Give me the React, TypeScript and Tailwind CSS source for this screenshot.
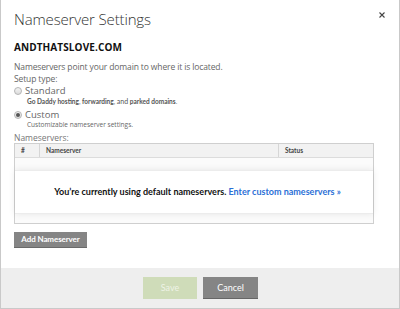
export default function App() {
  return (
    <div
      className="w-[400px] h-[309px] bg-white border-x border-b border-[#c9c9c9] flex flex-col text-[#555]"
      style={{ fontFamily: '"Open Sans", sans-serif' }}
    >
      <div className="flex-1 px-[13px]">
        {/* Header */}
        <div className="flex items-start justify-between pt-[8px]">
          <h1 className="text-[15px] font-light text-[#333] leading-[22px] tracking-[-0.15px]">Nameserver Settings</h1>
          <button className="mt-[4px] mr-[1px] leading-none" aria-label="Close">
            <svg width="6" height="6" viewBox="0 0 6 6">
              <path d="M0.5 0.5 L5.5 5.5 M5.5 0.5 L0.5 5.5" stroke="#444" strokeWidth="1.1" />
            </svg>
          </button>
        </div>

        <div className="mt-[10px] text-[10px] font-bold text-[#111] leading-[14px] tracking-[0.1px]">ANDTHATSLOVE.COM</div>

        <div className="mt-[7px] text-[8.5px] leading-[11.5px] tracking-[-0.12px] text-[#666]">
          <p>Nameservers point your domain to where it is located.</p>
          <p>Setup type:</p>
        </div>

        {/* Radio options */}
        <div>
          <label className="flex items-center gap-[3px] text-[9.5px] leading-[13px] text-[#666]">
            <Radio checked={false} />
            Standard
          </label>
          <div
            className="pl-[13px] text-[6.5px] leading-[8px] text-[#555]"
            style={{ fontFamily: 'Lato, sans-serif' }}
          >
            <b>Go Daddy hosting</b>, <b>forwarding</b>, <span className="text-[7px]">and</span> <b>parked domains</b>.
          </div>
          <label className="mt-[2px] flex items-center gap-[3px] text-[9.5px] leading-[13px] text-[#666]">
            <Radio checked />
            Custom
          </label>
          <div className="pl-[13px] text-[6.5px] leading-[8px] text-[#666]">Customizable nameserver settings.</div>
        </div>

        <div className="mt-[4px] text-[8.5px] leading-[10px] text-[#777]">Nameservers:</div>

        {/* Table */}
        <div className="mt-[0px] w-[360px] border border-[#cfcfcf]">
          <div
            className="flex h-[14px] items-center bg-[#f2f2f2] border-b border-[#dcdcdc] text-[6.5px] font-bold text-[#444]"
            style={{ fontFamily: 'Lato, sans-serif' }}
          >
            <div className="w-[25px] h-full pl-[6px] flex items-center border-r border-[#d6d6d6]">#</div>
            <div className="w-[239px] h-full pl-[6px] flex items-center border-r border-[#d6d6d6]">Nameserver</div>
            <div className="flex-1 pl-[6px]">Status</div>
          </div>
          <div className="h-[12px] bg-[#fbfbfb]" />
          <div className="relative h-[44px] bg-white border-y border-[#ececec] shadow-[0_0_7px_rgba(0,0,0,0.09)] flex items-center justify-center">
            <p className="text-[9px] font-bold text-[#111] pl-[7px]" style={{ fontFamily: 'Lato, sans-serif' }}>
              You’re currently using default nameservers.{' '}
              <a className="text-[#2a6fd6]">Enter custom nameservers »</a>
            </p>
          </div>
          <div className="h-[9px] bg-[#fbfbfb]" />
        </div>

        <button
          className="mt-[3px] h-[16px] w-[73px] bg-[#858585] border-b border-[#6a6a6a] text-white text-[8px] font-bold tracking-[-0.1px]"
          style={{ fontFamily: 'Lato, sans-serif' }}
        >
          Add Nameserver
        </button>
      </div>

      {/* Footer */}
      <div className="h-[40px] bg-[#eeeeee] flex justify-center gap-[6px] pt-[9px]" style={{ fontFamily: 'Lato, sans-serif' }}>
        <button className="w-[54px] h-[22px] bg-[#cfdcb9] text-[#eef3e6] text-[9px] ml-[1px]">Save</button>
        <button className="w-[55px] h-[22px] bg-[#858585] border-b border-[#666] text-white text-[9px]">Cancel</button>
      </div>
    </div>
  );
}

function Radio({ checked }: { checked: boolean }) {
  return (
    <span className="w-[8px] h-[8px] rounded-full border border-[#b5b5b5] bg-gradient-to-b from-[#f4f4f4] to-[#dcdcdc] flex items-center justify-center">
      {checked && <span className="w-[4px] h-[4px] rounded-full bg-[#555]" />}
    </span>
  );
}
